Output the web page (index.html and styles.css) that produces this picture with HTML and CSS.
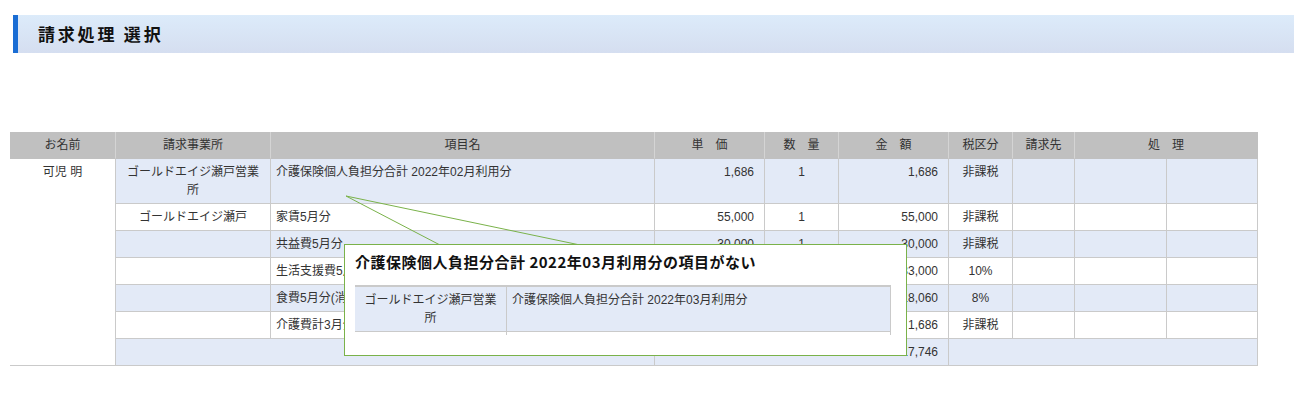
FILE: index.html
```html
<!DOCTYPE html>
<html lang="ja">
<head>
<meta charset="utf-8">
<title>請求処理 選択</title>
<link rel="stylesheet" href="styles.css">
</head>
<body>
<header class="page-title"><h1>請求処理 選択</h1></header>
<main class="content">
  <table class="list">
    <colgroup>
      <col class="w-name"><col class="w-office"><col class="w-item"><col class="w-price"><col class="w-qty"><col class="w-amount"><col class="w-tax"><col class="w-to"><col class="w-proc1"><col class="w-proc2">
    </colgroup>
    <thead>
      <tr><th>お名前</th><th>請求事業所</th><th>項目名</th><th>単　価</th><th>数　量</th><th>金　額</th><th>税区分</th><th>請求先</th><th colspan="2" class="last">処　理</th></tr>
    </thead>
    <tbody>
      <tr class="odd"><td class="name" rowspan="7">可児 明</td><td class="office">ゴールドエイジ瀬戸営業所</td><td class="item">介護保険個人負担分合計 2022年02月利用分</td><td class="num">1,686</td><td class="qty">1</td><td class="num">1,686</td><td class="tax">非課税</td><td></td><td></td><td></td></tr>
      <tr><td class="office">ゴールドエイジ瀬戸</td><td class="item">家賃5月分</td><td class="num">55,000</td><td class="qty">1</td><td class="num">55,000</td><td class="tax">非課税</td><td></td><td></td><td></td></tr>
      <tr class="odd"><td class="office"></td><td class="item">共益費5月分</td><td class="num">30,000</td><td class="qty">1</td><td class="num">30,000</td><td class="tax">非課税</td><td></td><td></td><td></td></tr>
      <tr><td class="office"></td><td class="item">生活支援費5月分(消費税10%)</td><td class="num">33,000</td><td class="qty">1</td><td class="num">33,000</td><td class="tax">10%</td><td></td><td></td><td></td></tr>
      <tr class="odd"><td class="office"></td><td class="item">食費5月分(消費税8%)</td><td class="num">18,060</td><td class="qty">1</td><td class="num">18,060</td><td class="tax">8%</td><td></td><td></td><td></td></tr>
      <tr><td class="office"></td><td class="item">介護費計3月分</td><td class="num">1,686</td><td class="qty">1</td><td class="num">1,686</td><td class="tax">非課税</td><td></td><td></td><td></td></tr>
      <tr class="odd"><td colspan="2"></td><td colspan="3" class="num">17,746</td><td colspan="4"></td></tr>
    </tbody>
  </table>

  <svg class="callout" width="250" height="60" viewBox="0 0 250 60" aria-hidden="true">
    <line x1="6" y1="6" x2="100" y2="55" />
    <line x1="6" y1="6" x2="240" y2="55" />
  </svg>
  <div class="popup">
    <p class="popup-title">介護保険個人負担分合計 2022年03月利用分の項目がない</p>
    <div class="popup-list">
      <table class="mini">
        <colgroup><col class="m-office"><col class="m-item"></colgroup>
        <tr class="odd"><td class="office">ゴールドエイジ瀬戸営業所</td><td class="item">介護保険個人負担分合計 2022年03月利用分</td></tr>
        <tr><td class="office">&nbsp;</td><td>&nbsp;</td></tr>
      </table>
    </div>
  </div>
</main>
</body>
</html>
```

FILE: styles.css
```css
* { box-sizing: border-box; }

body {
  margin: 0;
  background: #fff;
  color: #333;
  font-family: "Liberation Sans", "Noto Sans CJK JP", sans-serif;
  font-size: 12px;
}

.page-title {
  margin: 15px 9px 0 13px;
  height: 38px;
  border-left: 5px solid #1a6dd4;
  background: linear-gradient(#dcebfa, #d5def0);
  padding-left: 20px;
  display: flex;
  align-items: center;
}

.page-title h1 {
  margin: 0;
  font-family: "Noto Sans CJK JP", sans-serif;
  font-size: 17px;
  font-weight: bold;
  letter-spacing: 2.8px;
  color: #111;
  line-height: 20px;
}

.content {
  position: relative;
  padding: 79px 0 0 10px;
}

.list, .mini {
  border-collapse: separate;
  border-spacing: 0;
  table-layout: fixed;
}

.list { width: 1248px; }

.w-name { width: 106px; }
.w-office { width: 155px; }
.w-item { width: 384px; }
.w-price { width: 110px; }
.w-qty { width: 74px; }
.w-amount { width: 110px; }
.w-tax { width: 64px; }
.w-to { width: 62px; }
.w-proc1 { width: 92px; }
.w-proc2 { width: 91px; }

.list th {
  background: #c0c0c0;
  font-weight: normal;
  color: #333;
  line-height: 18px;
  padding: 4px 4px;
  border-right: 1px solid #d4d4d4;
  border-bottom: 1px solid #c0c0c0;
  text-align: center;
  white-space: nowrap;
}

.list th.last { border-right-color: #c0c0c0; }

.list td, .mini td {
  line-height: 18px;
  padding: 4px 5px;
  border-right: 1px solid #cacaca;
  border-bottom: 1px solid #cacaca;
  vertical-align: top;
  background: #fff;
}

.list tr.odd td, .mini tr.odd td { background: #e3eaf7; }

.list tr td.name,
.list tr.odd td.name {
  background: #fff;
  text-align: center;
}

td.office {
  text-align: center;
  padding-left: 6px;
  padding-right: 6px;
}

td.num {
  text-align: right;
  padding-right: 10px;
}

td.qty, td.tax { text-align: center; }

.callout {
  position: absolute;
  left: 340px;
  top: 137px;
}

.callout line {
  stroke: #7ab24a;
  stroke-width: 1;
}

.popup {
  position: absolute;
  left: 344px;
  top: 191px;
  width: 563px;
  height: 112px;
  background: #fff;
  border: 1px solid #7ab24a;
  padding: 7px 10px 0 10px;
}

.popup-title {
  margin: 0;
  font-family: "Noto Sans CJK JP", sans-serif;
  font-size: 15px;
  font-weight: bold;
  letter-spacing: 0.5px;
  line-height: 20px;
  color: #111;
  white-space: nowrap;
}

.popup-list {
  margin-top: 13px;
  height: 50px;
  overflow: hidden;
}

.mini {
  width: 536px;
  border-top: 2px solid #cacaca;
}

.m-office { width: 152px; }
.m-item { width: 384px; }
```
